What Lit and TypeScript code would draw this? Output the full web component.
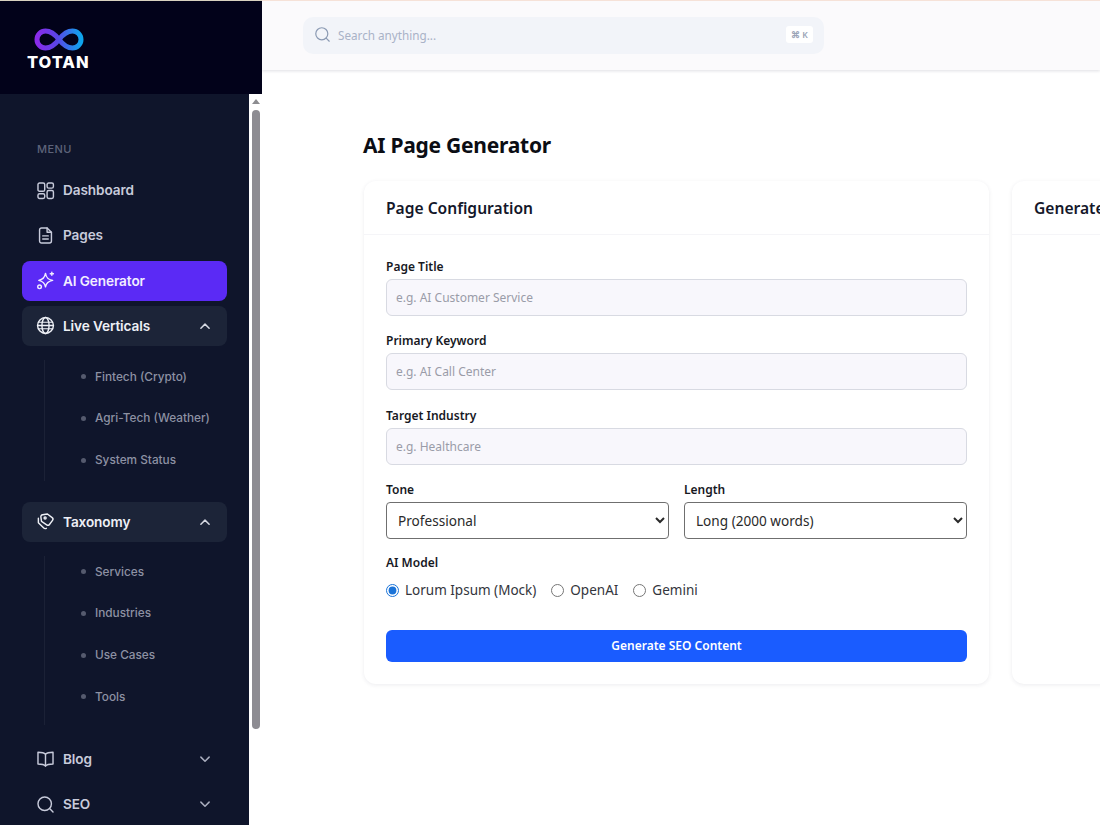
import { LitElement, html, css, svg } from "lit";
import { customElement } from "lit/decorators.js";

const icon = (body: unknown, size = 19, sw = 1.8) => html`<svg class="ico" width=${size} height=${size} viewBox="0 0 24 24" fill="none" stroke="currentColor" stroke-width=${sw} stroke-linecap="round" stroke-linejoin="round">${body}</svg>`;

const I = {
  dash: svg`<rect x="2.500" y="2.500" width="8.500" height="10.500" rx="2"/><rect x="14" y="2.500" width="8" height="6.500" rx="2"/><rect x="2.500" y="16" width="8.500" height="6" rx="2"/><rect x="14" y="12" width="8" height="10" rx="2"/>`,
  file: svg`<path d="M14 2.500H7a2.500 2.500 0 0 0-2.500 2.500v14A2.500 2.500 0 0 0 7 21.500h10a2.500 2.500 0 0 0 2.500-2.500V8z"/><path d="M14 2.500V8h5.500"/><path d="M8.500 12.500h7M8.500 16.500h7"/>`,
  spark: svg`<path d="M12 4c.9 5.500 3 7.700 9 8.800-6 1.100-8.100 3.300-9 8.200-.9-4.900-3-7.100-8.500-8.200C9 11.700 11.100 9.500 12 4z" transform="translate(0 -1)"/><path d="M20 1.500v4M18 3.500h4"/><circle cx="4.500" cy="20" r="2.300"/>`,
  globe: svg`<circle cx="12" cy="12" r="10"/><path d="M2 12h20"/><path d="M3 8h18M3 16h18" stroke-width="1.300"/><ellipse cx="12" cy="12" rx="4.500" ry="10"/>`,
  tag: svg`<path d="M9.500 3h6.200l5.300 5.300a2.500 2.500 0 0 1 0 3.500l-4.600 4.600a2.500 2.500 0 0 1-3.500 0L7 11.200V5.500A2.500 2.500 0 0 1 9.500 3z" transform="rotate(-8 12 12)"/><circle cx="11.500" cy="7.500" r="1.300"/><path d="M3 8v5.500l6.500 6.500a3 3 0 0 0 3.500.6"/>`,
  book: svg`<path d="M12 6.500C10.500 4.800 8 4 2.500 4v15c5.500 0 8 .8 9.500 2.500 1.500-1.700 4-2.500 9.500-2.500V4C16 4 13.500 4.800 12 6.500z"/><path d="M12 6.500v15"/>`,
  search: svg`<circle cx="11" cy="11" r="8.500"/><path d="M17.500 17.500 21.500 21.500"/>`,
  up: svg`<path d="M6.500 15l5.500-5.500 5.500 5.500"/>`,
  down: svg`<path d="M6.500 9.500l5.500 5.500 5.500-5.500"/>`,
};

@customElement("app-root")
export class AppRoot extends LitElement {
  static styles = css`
    :host { display: block; width: 1100px; height: 825px; overflow: hidden; background: #fff; font-family: "Noto Sans", "Open Sans", sans-serif; color: #10131f; }
    * { box-sizing: border-box; }
    .app { display: grid; grid-template-columns: 262px 1fr; height: 825px; }
    .side { display: flex; flex-direction: column; height: 825px; overflow: hidden; }
    .brand { height: 94px; background: #02021a; padding: 27px 0 0 27px; display: flex; flex-direction: column; align-items: flex-start; border-top: 1px solid #d8d2c0; }
    .brand svg { margin-left: 7px; display: block; }
    .brand span { font: 800 16.500px/16px Inter, sans-serif; color: #fff; letter-spacing: .95px; margin-top: 3px; }
    .side-body { flex: 1; display: flex; min-height: 0; }
    .nav { width: 249px; background: #0f152b; padding: 48px 22px 0; font-family: Inter, sans-serif; overflow: hidden; }
    .menu { font-size: 11px; line-height: 14px; font-weight: 500; color: #5d6379; letter-spacing: .4px; margin: 0 0 0 15px; height: 28px; }
    .item { height: 40px; margin-bottom: 5.300px; display: flex; align-items: center; gap: 8px; padding: 0 14px; border-radius: 8px; font-size: 13.600px; font-weight: 600; color: #c8cbdb; letter-spacing: -.1px; }
    .item .ico { flex: none; }
    .item .chev { margin-left: auto; margin-right: -1px; color: #a9adbe; display: flex; }
    .item.active { background: #5b2af5; color: #f1edff; }
    .item.open { background: #1c2438; color: #eef0f6; }
    .item.open .chev { color: #d5d8e2; }
    .sub { display: flow-root; margin: 14px 0 21px 22px; padding-left: 36px; border-left: 1px solid #1b2136; height: 121px; font-size: 11.800px; font-weight: 500; color: #8d91a3; }
    .sub.tax { height: 169px; margin-bottom: 14px; }
    .sub div { height: 41.700px; display: flex; align-items: center; gap: 9px; }
    .sub div:first-child { margin-top: -4px; }
    .sub.tax div:first-child { margin-top: -5px; }
    .sub div::before { content: ""; width: 5px; height: 5px; border-radius: 50%; background: #555a6e; }
    .scroll { width: 13px; background: #fff; display: flex; flex-direction: column; align-items: center; padding-top: 5px; gap: 6px; }
    .arrow { width: 0; height: 0; border: 4.500px solid transparent; border-top: 0; border-bottom: 5px solid #8c8c90; }
    .thumb { width: 8px; height: 619px; background: #8d8c92; border-radius: 4px; }
    .main { min-width: 0; display: flex; flex-direction: column; overflow: hidden; }
    .top { height: 70px; flex: none; background: #fbfafc; border-top: 1px solid #f6e2d8; box-shadow: 0 1px 3px rgba(30, 30, 60, .14); padding: 16px 0 0 41px; }
    .search { width: 521px; height: 37px; background: #f2f4f9; border-radius: 10px; display: flex; align-items: center; padding: 0 11px 2px; gap: 7px; color: #8b9ab3; }
    .search p { margin: 0; font-size: 11.700px; color: #a9b2c7; flex: 1; }
    .kbd { width: 27px; height: 17px; background: #fff; border-radius: 3px; font-size: 8.500px; font-weight: 600; color: #9aa3b6; display: flex; align-items: center; justify-content: center; }
    .content { padding: 61px 0 0 101px; }
    h1 { margin: 0 0 22px; font-size: 21px; line-height: 28px; font-weight: 700; letter-spacing: -.25px; color: #0b0d14; }
    .cards { display: flex; gap: 22px; width: 1100px; }
    .card { flex: none; height: 503px; background: #fff; border-radius: 12px; box-shadow: 0 1px 4px rgba(40, 40, 80, .09); margin-left: 1px; }
    .card.a { width: 625px; }
    .card.b { width: 625px; }
    .head { height: 54px; padding: 0 22px; display: flex; align-items: center; border-bottom: 1px solid #f5f5f8; font-size: 15.600px; font-weight: 600; color: #14172a; white-space: nowrap; }
    .body { padding: 22.500px 22px 0; }
    label.l { display: block; font-size: 12px; line-height: 18px; font-weight: 600; color: #17191f; margin-bottom: 3px; }
    input.t { display: block; width: 100%; height: 37px; border: 1px solid #d8dae2; border-radius: 6px; background: #f8f7fc; padding: 0 9px; margin-bottom: 16.500px; font: 12px "Noto Sans", sans-serif; }
    input.t::placeholder { color: #9a9ca8; opacity: 1; }
    .row { display: grid; grid-template-columns: 283px 283px; gap: 15px; margin-bottom: 15px; margin-top: -.5px; }
    select { display: block; width: 100%; height: 37px; border: 1px solid #6f6f6f; border-radius: 4px; background: #fff; color: #2a2a2a; font: 13.600px "Noto Sans", sans-serif; padding: 0 7px; }
    .radios { display: flex; align-items: center; height: 26px; font-size: 13.500px; color: #33353c; margin-top: 5.500px; }
    .radios input { margin: 0 6px 0 0; width: 13px; height: 13px; accent-color: #1a73d8; }
    .radios label { display: flex; align-items: center; margin-right: 15px; }
    button { display: block; width: 100%; height: 32px; margin-top: 26.500px; border: 0; border-radius: 6px; background: #1a5cff; color: #fff; font: 600 12px "Noto Sans", sans-serif; }
  `;

  render() {
    return html`<div class="app">
      <aside class="side">
        <div class="brand">
          <svg width="50" height="23" viewBox="0 0 50 23" fill="none">
            <defs><linearGradient id="g" x1="0" x2="1" y1="0" y2="0"><stop offset="0" stop-color="#8a2bea"/><stop offset=".45" stop-color="#5a45e6"/><stop offset="1" stop-color="#0ea5ee"/></linearGradient></defs>
            <path d="M25 11.500C20 5 16 3 11.500 3a8.500 8.500 0 0 0 0 17c4.500 0 8.500-2 13.500-8.500S34 3 38.500 3a8.500 8.500 0 0 1 0 17c-4.500 0-8.500-2-13.500-8.500z" stroke="url(#g)" stroke-width="5"/>
          </svg>
          <span>TOTAN</span>
        </div>
        <div class="side-body">
          <nav class="nav">
            <div class="menu">MENU</div>
            <div class="item">${icon(I.dash)}Dashboard</div>
            <div class="item">${icon(I.file)}Pages</div>
            <div class="item active">${icon(I.spark)}AI Generator</div>
            <div class="item open">${icon(I.globe)}Live Verticals<span class="chev">${icon(I.up, 18, 2)}</span></div>
            <div class="sub"><div>Fintech (Crypto)</div><div>Agri-Tech (Weather)</div><div>System Status</div></div>
            <div class="item open">${icon(I.tag)}Taxonomy<span class="chev">${icon(I.up, 18, 2)}</span></div>
            <div class="sub tax"><div>Services</div><div>Industries</div><div>Use Cases</div><div>Tools</div></div>
            <div class="item">${icon(I.book)}Blog<span class="chev">${icon(I.down, 18, 2)}</span></div>
            <div class="item">${icon(I.search)}SEO<span class="chev">${icon(I.down, 18, 2)}</span></div>
          </nav>
          <div class="scroll"><div class="arrow"></div><div class="thumb"></div></div>
        </div>
      </aside>
      <main class="main">
        <header class="top">
          <div class="search">${icon(I.search, 17, 1.7)}<p>Search anything...</p><span class="kbd">⌘ K</span></div>
        </header>
        <section class="content">
          <h1>AI Page Generator</h1>
          <div class="cards">
            <div class="card a">
              <div class="head">Page Configuration</div>
              <div class="body">
                <label class="l">Page Title</label><input class="t" placeholder="e.g. AI Customer Service" />
                <label class="l">Primary Keyword</label><input class="t" placeholder="e.g. AI Call Center" />
                <label class="l">Target Industry</label><input class="t" placeholder="e.g. Healthcare" />
                <div class="row">
                  <div><label class="l">Tone</label><select><option>Professional</option></select></div>
                  <div><label class="l">Length</label><select><option>Long (2000 words)</option></select></div>
                </div>
                <label class="l">AI Model</label>
                <div class="radios">
                  <label><input type="radio" name="m" checked />Lorum Ipsum (Mock)</label>
                  <label><input type="radio" name="m" />OpenAI</label>
                  <label><input type="radio" name="m" />Gemini</label>
                </div>
                <button>Generate SEO Content</button>
              </div>
            </div>
            <div class="card b"><div class="head">Generated Output</div></div>
          </div>
        </section>
      </main>
    </div>`;
  }
}
